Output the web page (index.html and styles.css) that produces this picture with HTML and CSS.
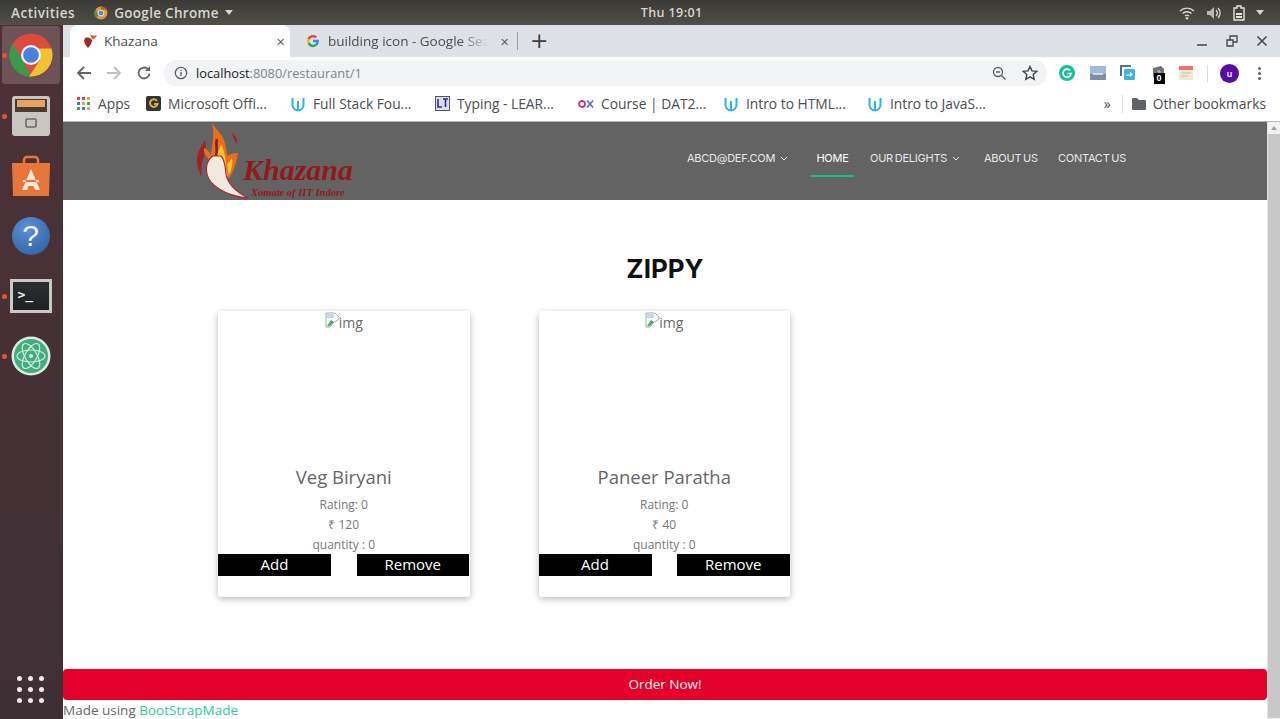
FILE: index.html
```html
<!DOCTYPE html>
<html lang="en">
<head>
  <meta charset="UTF-8" />
  <title>Khazana</title>
  <link rel="stylesheet" href="styles.css">
</head>
<body>

  <!-- Ubuntu top bar -->
  <div class="topbar">
    <span class="activities">Activities</span>
    <span class="app-menu">
      <svg width="14" height="14" viewBox="0 0 24 24"><circle cx="12" cy="12" r="11" fill="#d9a033"/><path d="M12 1a11 11 0 0 1 9.5 5.5H12z" fill="#c9503c"/><path d="M2.5 6.5 8 16 3 20A11 11 0 0 1 2.5 6.5z" fill="#5c8a4a"/><circle cx="12" cy="12" r="5" fill="#5a86c8" stroke="#eee" stroke-width="1.5"/></svg>
      Google Chrome
      <i class="caret"></i>
    </span>
    <span class="clock">Thu 19:01</span>
    <span class="tray">
      <svg width="16" height="14" viewBox="0 0 16 14"><path d="M1 5a10 10 0 0 1 14 0M3.500 7.500a6.500 6.500 0 0 1 9 0M6 10a3 3 0 0 1 4 0" fill="none" stroke="#d8d8d4" stroke-width="1.400"/><circle cx="8" cy="12.300" r="1.300" fill="#d8d8d4"/></svg>
      <svg width="16" height="14" viewBox="0 0 16 14"><path d="M1 5h3l4-4v12l-4-4H1z" fill="#b8b8b4"/><path d="M10 4a4 4 0 0 1 0 6M12 2a7 7 0 0 1 0 10" fill="none" stroke="#d8d8d4" stroke-width="1.300"/></svg>
      <svg width="12" height="16" viewBox="0 0 12 16"><path d="M4 1h4v2h3v12H1V3h3z" fill="none" stroke="#e4e4e0" stroke-width="1.400"/><path d="M3 8h6v2H3zM3 11h6v2H3z" fill="#e4e4e0"/></svg>
      <i class="caret"></i>
    </span>
  </div>

  <div class="desktop">

    <!-- Launcher -->
    <aside class="dock">
      <div class="dock-item active">
        <i class="run-dot"></i>
        <svg width="44" height="44" viewBox="0 0 44 44"><circle cx="22" cy="22" r="21.500" fill="#dd4b3c"/><path d="M3.800 10.500 13 26l9 17.500A21.500 21.500 0 0 1 3.800 10.500z" fill="#3a9a4c"/><path d="M42.500 15.500A21.500 21.500 0 0 1 20 43.400L31 27l-9-11.500z" fill="#f2c230"/><circle cx="22" cy="22" r="10" fill="#eef2f8"/><circle cx="22" cy="22" r="7.800" fill="#4a80e0"/></svg>
      </div>
      <div class="dock-item">
        <i class="run-dot"></i>
        <svg width="38" height="42" viewBox="0 0 38 42"><rect x="0" y="1" width="38" height="40" rx="3" fill="#c8c6c0"/><rect x="3" y="4" width="32" height="13" fill="#4c3b32"/><rect x="5" y="5" width="28" height="7" fill="#e8a263"/><rect x="14" y="24" width="10" height="8" rx="1" fill="none" stroke="#6a6a66" stroke-width="1.600"/></svg>
      </div>
      <div class="dock-item">
        <svg width="40" height="42" viewBox="0 0 40 42"><path d="M13 8V5a3 3 0 0 1 3-3h8a3 3 0 0 1 3 3v3" fill="none" stroke="#e8763a" stroke-width="2.500"/><path d="M1 8h38l-1 33H2z" fill="#e8763a"/><path d="M20 14 11 35h5l1.500-4h5l1.500 4h5zM12 25h16v2H12z" fill="#fbe6d8"/></svg>
      </div>
      <div class="dock-item">
        <div class="help-ball">?</div>
      </div>
      <div class="dock-item">
        <i class="run-dot"></i>
        <div class="term"><span>&gt;_</span></div>
      </div>
      <div class="dock-item">
        <i class="run-dot"></i>
        <svg width="40" height="40" viewBox="0 0 40 40"><circle cx="20" cy="20" r="19.500" fill="#dfe9e2"/><circle cx="20" cy="20" r="17" fill="#3fae7c"/><g fill="none" stroke="#d4eadf" stroke-width="1.200"><ellipse cx="20" cy="20" rx="14" ry="6"/><ellipse cx="20" cy="20" rx="14" ry="6" transform="rotate(60 20 20)"/><ellipse cx="20" cy="20" rx="14" ry="6" transform="rotate(120 20 20)"/></g><circle cx="20" cy="20" r="2" fill="#d4eadf"/></svg>
      </div>
      <div class="dock-grid">
        <i></i><i></i><i></i><i></i><i></i><i></i><i></i><i></i><i></i>
      </div>
    </aside>

    <div class="browser">

      <!-- Tabs -->
      <div class="tabstrip">
        <div class="tab active-tab">
          <svg width="16" height="16" viewBox="0 0 16 16"><path d="M8 1c2 2 5 2 7 1-1 2-2 4-5 4z" fill="#c9602c"/><path d="M3 5c3-1 6 0 7 2 0 3-2 6-4 8C3 12 1 8 3 5z" fill="#a02a2a"/></svg>
          <span class="tab-title">Khazana</span>
          <span class="tab-x">&#10005;</span>
        </div>
        <div class="tab other-tab">
          <svg width="14" height="14" viewBox="0 0 48 48"><path d="M44 24c0-1.500-.1-3-.4-4H24v8h11.300a10 10 0 0 1-4.200 6.500l6.800 5.300C41.900 36 44 30.500 44 24z" fill="#4285f4"/><path d="M24 45c5.700 0 10.400-1.900 13.900-5.200l-6.800-5.300c-1.900 1.300-4.300 2-7.100 2-5.500 0-10.100-3.700-11.800-8.700l-7 5.400C8.700 39.900 15.800 45 24 45z" fill="#34a853"/><path d="M12.200 27.800a12.700 12.700 0 0 1 0-7.600l-7-5.400a21 21 0 0 0 0 18.400z" fill="#fbbc05"/><path d="M24 11.500c3.100 0 5.900 1.100 8.100 3.200l6-6C34.400 5.200 29.700 3 24 3 15.800 3 8.700 8.100 5.200 14.800l7 5.400c1.700-5 6.300-8.700 11.800-8.700z" fill="#ea4335"/></svg>
          <span class="tab-title fade">building icon - Google Sea</span>
          <span class="tab-x">&#10005;</span>
        </div>
        <i class="tab-sep"></i>
        <span class="new-tab">+</span>
        <div class="win-btns">
          <svg width="12" height="12" viewBox="0 0 12 12"><path d="M1 10h10" stroke="#444" stroke-width="1.500"/></svg>
          <svg width="12" height="12" viewBox="0 0 12 12"><path d="M1 5h6v6H1z" fill="none" stroke="#444" stroke-width="1.300"/><path d="M4 5V1h7v6H7" fill="none" stroke="#444" stroke-width="1.300"/></svg>
          <svg width="12" height="12" viewBox="0 0 12 12"><path d="M1.500 1.500l9 9M10.500 1.500l-9 9" stroke="#444" stroke-width="1.500"/></svg>
        </div>
      </div>

      <!-- Address bar -->
      <div class="toolbar">
        <svg class="nav-icon" width="16" height="16" viewBox="0 0 16 16"><path d="M15 8H2M8 2 2 8l6 6" fill="none" stroke="#5f6368" stroke-width="1.800"/></svg>
        <svg class="nav-icon" width="16" height="16" viewBox="0 0 16 16"><path d="M1 8h13M8 2l6 6-6 6" fill="none" stroke="#bcbfc4" stroke-width="1.800"/></svg>
        <svg class="nav-icon" width="16" height="16" viewBox="0 0 16 16"><path d="M13.500 8.500A5.500 5.500 0 1 1 12 4.200" fill="none" stroke="#5f6368" stroke-width="1.800"/><path d="M14 1v5H9z" fill="#5f6368"/></svg>
        <div class="omnibox">
          <svg width="14" height="14" viewBox="0 0 14 14"><circle cx="7" cy="7" r="5.700" fill="none" stroke="#5f6368" stroke-width="1.300"/><path d="M7 6v4M7 3.700v1.300" stroke="#5f6368" stroke-width="1.400"/></svg>
          <span class="url"><b>localhost</b>:8080/restaurant/1</span>
          <svg class="omni-right" width="14" height="14" viewBox="0 0 14 14"><circle cx="6" cy="6" r="4.500" fill="none" stroke="#5f6368" stroke-width="1.400"/><path d="M9.500 9.500 13.500 13.500M4 6h4" stroke="#5f6368" stroke-width="1.400"/></svg>
          <svg width="16" height="16" viewBox="0 0 16 16"><path d="M8 1.500l2 4.400 4.700.5-3.500 3.200 1 4.700L8 11.900l-4.200 2.400 1-4.700L1.300 6.400 6 5.900z" fill="none" stroke="#444" stroke-width="1.400"/></svg>
        </div>
        <div class="extensions">
          <svg width="16" height="16" viewBox="0 0 16 16"><circle cx="8" cy="8" r="8" fill="#15c39a"/><path d="M11 5.500A4 4 0 1 0 12 8.500H8.500" fill="none" stroke="#fff" stroke-width="1.600"/></svg>
          <svg width="16" height="14" viewBox="0 0 16 14"><rect width="16" height="14" fill="#9fbcd6"/><rect y="8" width="16" height="6" fill="#7d8ea6"/><path d="M3 8h10" stroke="#e8eef4" stroke-width="1.500"/></svg>
          <svg width="16" height="16" viewBox="0 0 16 16"><path d="M1 11V1h10" fill="none" stroke="#1d4a78" stroke-width="1.600"/><rect x="4" y="4" width="11" height="11" rx="1.500" fill="#3fb4dc"/><path d="M6 9.500h4V7l3 2.500-3 2.500V10.500H6z" fill="#fff"/></svg>
          <span class="ext-badged">
            <svg width="14" height="16" viewBox="0 0 14 16"><path d="M2 3l8-2 3 3v9l-6 2-5-3z" fill="#6e7074"/><path d="M6 6h3v2H7v2" fill="none" stroke="#ccc" stroke-width="1"/></svg>
            <span class="badge">0</span>
          </span>
          <svg width="14" height="14" viewBox="0 0 14 14"><rect width="14" height="14" fill="#f3e8d4"/><rect width="14" height="4" fill="#e8746a"/><path d="M2 7h10M2 10h7" stroke="#c9c2a8" stroke-width="1.200"/></svg>
        </div>
        <i class="tool-sep"></i>
        <span class="avatar">u</span>
        <span class="kebab"><i></i><i></i><i></i></span>
      </div>

      <!-- Bookmarks -->
      <div class="bookmarks">
        <span class="bm bm-apps">
          <svg width="14" height="14" viewBox="0 0 14 14"><g fill="#d8473c"><rect width="3" height="3"/><rect x="5" width="3" height="3"/></g><rect x="10" width="3" height="3" fill="#e8a93c"/><rect y="5" width="3" height="3" fill="#3c78d8"/><rect x="5" y="5" width="3" height="3" fill="#e8a93c"/><rect x="10" y="5" width="3" height="3" fill="#3ca85c"/><rect y="10" width="3" height="3" fill="#3ca85c"/><rect x="5" y="10" width="3" height="3" fill="#3c78d8"/><rect x="10" y="10" width="3" height="3" fill="#e8a93c"/></svg>
          Apps
        </span>
        <span class="bm bm-office">
          <svg width="15" height="15" viewBox="0 0 15 15"><rect width="15" height="15" rx="2" fill="#333"/><path d="M11 5a3.800 3.800 0 1 0 .5 3H8" fill="none" stroke="#d8b43c" stroke-width="2"/></svg>
          Microsoft Offi...
        </span>
        <span class="bm bm-full">
          <svg class="udacity" width="16" height="16" viewBox="0 0 16 16"><path d="M2.500 2v7a5.500 5.500 0 0 0 11 0V2M8 5v9" fill="none" stroke="#2eb4e0" stroke-width="2"/></svg>
          Full Stack Fou...
        </span>
        <span class="bm bm-typing">
          <svg width="15" height="15" viewBox="0 0 15 15"><rect x=".5" y=".5" width="14" height="14" fill="#dcdcf0" stroke="#555"/><path d="M3 3v8h4M8 3h5M10.500 3v8" fill="none" stroke="#2e2e8c" stroke-width="1.600"/></svg>
          Typing - LEAR...
        </span>
        <span class="bm bm-edx">
          <svg width="16" height="10" viewBox="0 0 16 10"><circle cx="4" cy="5" r="3" fill="none" stroke="#c2387e" stroke-width="1.800"/><path d="M9 1.500l6 7M15 1.500l-6 7" stroke="#5a6cc0" stroke-width="1.700"/></svg>
          Course | DAT2...
        </span>
        <span class="bm bm-html">
          <svg class="udacity" width="16" height="16" viewBox="0 0 16 16"><path d="M2.500 2v7a5.500 5.500 0 0 0 11 0V2M8 5v9" fill="none" stroke="#2eb4e0" stroke-width="2"/></svg>
          Intro to HTML...
        </span>
        <span class="bm">
          <svg class="udacity" width="16" height="16" viewBox="0 0 16 16"><path d="M2.500 2v7a5.500 5.500 0 0 0 11 0V2M8 5v9" fill="none" stroke="#2eb4e0" stroke-width="2"/></svg>
          Intro to JavaS...
        </span>
        <span class="bm-more">&raquo;</span>
        <i class="bm-sep"></i>
        <span class="bm bm-other">
          <svg width="14" height="12" viewBox="0 0 14 12"><path d="M0 1a1 1 0 0 1 1-1h4l2 2h6a1 1 0 0 1 1 1v8a1 1 0 0 1-1 1H1a1 1 0 0 1-1-1z" fill="#5f6368"/></svg>
          Other bookmarks
        </span>
      </div>

      <!-- The page itself -->
      <div class="viewport">
        <div class="page">

          <header class="site-header">
            <svg class="logo" width="158" height="78" viewBox="0 0 158 78">
              <path d="M9 18C6 24 1 30 1 38c0 7 2 12 5 17-1-7-1-12 1-18 2-6 4-12 2-19zM36 11c4 3 6 7 5 11-2-3-4-6-5-11z" fill="#a42020"/>
              <path d="M16 1c5 8 11 11 13 20 1 5 2 10 2 13 3-2 7-3 11-3-1 7-3 15-8 24l-8 4-12-20c-4-6-7-8-6-13 3 1 5 4 7 7 1-12 4-20 1-32z" fill="#ea6f1c"/>
              <path d="M25 22c4 8 5 16 5 24l2 8-8-6-5-12c2-5 5-9 6-14zM36 36c1 5 0 11-3 17l-2-10z" fill="#f6c52c"/>
              <path d="M21 17c-2 5 1 10-1 17" fill="none" stroke="#8c1c1c" stroke-width="2.500"/>
              <path d="M17 34C11 38 9 46 11 52 13 62 28 74 52 76 42 71 32 64 30 52 29 44 29 38 25 34z" fill="#f2e8e2" stroke="#b02a2a" stroke-width="1.200"/>
              <text class="logo-name" x="47" y="58">Khazana</text>
              <text class="logo-sub" x="55" y="74">Xomate of IIT Indore</text>
            </svg>

            <nav class="site-nav">
              <a class="nav-link nav-user">abcd@def.com <svg class="chev" width="8" height="5" viewBox="0 0 8 5"><path d="M1 1l3 3 3-3" fill="none" stroke="#e4e4e4" stroke-width="1"/></svg></a>
              <a class="nav-link nav-home">Home</a>
              <a class="nav-link nav-delights">Our Delights <svg class="chev" width="8" height="5" viewBox="0 0 8 5"><path d="M1 1l3 3 3-3" fill="none" stroke="#e4e4e4" stroke-width="1"/></svg></a>
              <a class="nav-link nav-about">About Us</a>
              <a class="nav-link">Contact Us</a>
            </nav>
          </header>

          <main class="menu">
            <h1 class="restaurant-name">ZIPPY</h1>

            <div class="dish-row">
              <div class="dish-card">
                <div class="dish-img">
                  <svg width="16" height="16" viewBox="0 0 16 16"><path d="M1 1h9l4 4v2l-6 4-3 4H1z" fill="#fff" stroke="#a8a8a8"/><path d="M2 14l4-6 3 2-4 4z" fill="#5aa85c"/><path d="M2 2h7v4H2z" fill="#c4d8f4"/></svg>
                  <span>img</span>
                </div>
                <h3 class="dish-name">Veg Biryani</h3>
                <p class="dish-line">Rating: 0</p>
                <p class="dish-line">&#8377; 120</p>
                <p class="dish-line">quantity : 0</p>
                <div class="dish-btns">
                  <button class="btn-add">Add</button>
                  <button class="btn-remove">Remove</button>
                </div>
              </div>

              <div class="dish-card">
                <div class="dish-img">
                  <svg width="16" height="16" viewBox="0 0 16 16"><path d="M1 1h9l4 4v2l-6 4-3 4H1z" fill="#fff" stroke="#a8a8a8"/><path d="M2 14l4-6 3 2-4 4z" fill="#5aa85c"/><path d="M2 2h7v4H2z" fill="#c4d8f4"/></svg>
                  <span>img</span>
                </div>
                <h3 class="dish-name">Paneer Paratha</h3>
                <p class="dish-line">Rating: 0</p>
                <p class="dish-line">&#8377; 40</p>
                <p class="dish-line">quantity : 0</p>
                <div class="dish-btns">
                  <button class="btn-add">Add</button>
                  <button class="btn-remove">Remove</button>
                </div>
              </div>
            </div>
          </main>

          <button class="order-now">Order Now!</button>
          <p class="credits">Made using <a>BootStrapMade</a></p>
        </div>

        <div class="scrollbar">
          <i class="scroll-up"></i>
          <i class="scroll-thumb"></i>
        </div>
      </div>
    </div>
  </div>

</body>
</html>
```

FILE: styles.css
```css
/* Reset and base styling */
* {
  margin: 0;
  padding: 0;
  box-sizing: border-box;
}

html, body {
  height: 719px;
  overflow: hidden;
}

body {
  font-family: 'Open Sans', sans-serif;
  display: flex;
  flex-direction: column;
  background: #fff;
  color: #444;
}

i {
  display: block;
}

/* Top bar */
.topbar {
  height: 25px;
  flex: none;
  display: flex;
  align-items: center;
  padding: 0 16px 0 11px;
  background: linear-gradient(#3b3a36, #504e47);
  color: #d6d5d0;
  font-size: 13.5px;
  font-weight: 600;
}

.activities {
  letter-spacing: .5px;
}

.app-menu {
  display: flex;
  align-items: center;
  gap: 6px;
  margin-left: 19px;
  letter-spacing: .3px;
}

.caret {
  width: 0;
  height: 0;
  border-left: 4.5px solid transparent;
  border-right: 4.5px solid transparent;
  border-top: 5px solid #d6d5d0;
}

.clock {
  margin-left: 408px;
  font-size: 12.5px;
  letter-spacing: .4px;
}

.tray {
  margin-left: auto;
  display: flex;
  align-items: center;
  gap: 11px;
}

.desktop {
  flex: 1;
  display: flex;
  min-height: 0;
}

/* Launcher */
.dock {
  width: 63px;
  flex: none;
  display: flex;
  flex-direction: column;
  align-items: center;
  padding: 1px 2px 0 0;
  background: linear-gradient(#4d3138, #3d3034);
}

.dock-item {
  position: relative;
  width: 58px;
  height: 60px;
  display: flex;
  align-items: center;
  justify-content: center;
}

.dock-item.active {
  height: 58px;
  margin-bottom: 2px;
  border-radius: 3px;
  background: #6d5257;
}

.run-dot {
  position: absolute;
  left: 0;
  top: 50%;
  width: 5px;
  height: 5px;
  margin-top: -2px;
  border-radius: 50%;
  background: #dd5a2c;
}

.help-ball {
  width: 38px;
  height: 38px;
  border-radius: 50%;
  background: radial-gradient(circle at 40% 30%, #5a92d4, #2a5a9c);
  color: #f2f2f2;
  font: 400 30px/38px 'Liberation Sans', sans-serif;
  text-align: center;
}

.term {
  width: 42px;
  height: 34px;
  padding: 6px 0 0 5px;
  background: linear-gradient(#2a2e30, #1e2224);
  border: 3px solid #c8c8c4;
  color: #f2f2f2;
  font: bold 13px/14px 'DejaVu Sans Mono', monospace;
}

.dock-grid {
  margin-top: auto;
  margin-bottom: 16px;
  display: grid;
  grid-template-columns: repeat(3, 5px);
  gap: 6px;
}

.dock-grid i {
  width: 5px;
  height: 5px;
  border-radius: 50%;
  background: #eeeae8;
}

/* Browser */
.browser {
  flex: 1;
  min-width: 0;
  display: flex;
  flex-direction: column;
}

.tabstrip {
  height: 32px;
  flex: none;
  display: flex;
  align-items: center;
  padding-left: 7px;
  background: #dee1e6;
  font-size: 13.5px;
}

.tab {
  height: 32px;
  display: flex;
  align-items: center;
  color: #4a4d51;
}

.active-tab {
  width: 220px;
  gap: 6px;
  padding: 0 5px 0 12px;
  background: #fff;
  border-radius: 8px 8px 0 0;
}

.other-tab {
  width: 227px;
  gap: 8px;
  padding: 0 8px 0 16px;
}

.tab-title {
  flex: 1;
  white-space: nowrap;
}

.fade {
  -webkit-mask-image: linear-gradient(90deg, #000 80%, transparent 98%);
  mask-image: linear-gradient(90deg, #000 80%, transparent 98%);
}

.tab-x {
  font-size: 11px;
  color: #5f6368;
}

.tab-sep {
  width: 1px;
  height: 18px;
  background: #9a9da2;
}

.new-tab {
  margin-left: 12px;
  font: 22px/1 'DejaVu Sans', sans-serif;
  color: #3c4043;
}

.win-btns {
  margin-left: auto;
  display: flex;
  gap: 18px;
  padding-right: 12px;
}

.toolbar {
  height: 33px;
  flex: none;
  display: flex;
  align-items: center;
  padding: 0 0 1px 13px;
  background: #fff;
}

.nav-icon {
  margin-right: 14px;
}

.omnibox {
  width: 883px;
  height: 26px;
  margin-left: -2px;
  display: flex;
  align-items: center;
  gap: 9px;
  padding: 0 9px 0 10px;
  border-radius: 13px;
  background: #f1f3f4;
  font-size: 12.8px;
  color: #80868b;
}

.url {
  margin-left: -1px;
}

.url b {
  font-weight: 400;
  color: #202124;
}

.omni-right {
  margin-left: auto;
  margin-right: 7px;
}

.extensions {
  display: flex;
  align-items: center;
  gap: 14.5px;
  margin-left: 12px;
}

.ext-badged {
  position: relative;
  display: flex;
}

.badge {
  position: absolute;
  left: 3px;
  top: 8px;
  width: 11px;
  height: 11px;
  background: #000;
  color: #fff;
  font: bold 9px/11px 'Liberation Sans', sans-serif;
  text-align: center;
}

.tool-sep {
  width: 1px;
  height: 17px;
  margin-left: 14px;
  background: #dadce0;
}

.avatar {
  width: 19px;
  height: 19px;
  margin-left: 12px;
  border-radius: 50%;
  background: #5a0ca0;
  color: #ddd;
  font: bold 9px/19px 'Open Sans', sans-serif;
  text-align: center;
}

.kebab {
  margin-left: 19px;
  display: flex;
  flex-direction: column;
  gap: 2px;
}

.kebab i {
  width: 3px;
  height: 3px;
  border-radius: 50%;
  background: #5f6368;
}

.bookmarks {
  height: 32px;
  flex: none;
  display: flex;
  align-items: center;
  padding: 0 0 4px 14px;
  background: #fff;
  border-bottom: 1px solid #b4b6b8;
  font-size: 13.8px;
  color: #4a4d51;
  white-space: nowrap;
}

.bm {
  display: flex;
  align-items: center;
  gap: 7px;
}

.bm-apps { width: 69px; }
.bm-office { width: 144px; }
.bm-full { width: 145px; }
.bm-typing { width: 143px; }
.bm-edx { width: 145px; }
.bm-html { width: 144px; }

.bm-more {
  margin-left: auto;
  font-size: 14px;
}

.bm-sep {
  width: 1px;
  height: 18px;
  margin: 0 9px 0 11px;
  background: #dadce0;
}

.bm-other {
  padding-right: 14px;
}

/* Site page */
.viewport {
  flex: 1;
  min-height: 0;
  display: flex;
}

.page {
  flex: 1;
  min-width: 0;
  display: flex;
  flex-direction: column;
}

.site-header {
  height: 78px;
  flex: none;
  display: flex;
  align-items: center;
  padding-left: 133px;
  background: #636363;
}

.logo-name {
  font: italic 700 30px 'Liberation Serif', serif;
  fill: #8e1a1e;
}

.logo-sub {
  font: italic 700 10.5px 'Liberation Serif', serif;
  fill: #8e1a1e;
}

.site-nav {
  display: flex;
  align-self: flex-start;
  margin: 19px 0 0 333px;
}

.nav-link {
  display: flex;
  align-items: center;
  gap: 5px;
  height: 36px;
  padding-bottom: 2px;
  font: 11px 'Inter', sans-serif;
  letter-spacing: -.25px;
  word-spacing: -1px;
  color: #e8e8e8;
  text-transform: uppercase;
  white-space: nowrap;
}

.nav-user {
  width: 124px;
}

.nav-home {
  width: 43px;
  justify-content: center;
  margin-right: 16px;
  padding-bottom: 0;
  color: #fff;
  border-bottom: 2px solid #1bbd8c;
}

.nav-delights {
  width: 114px;
}

.nav-about {
  width: 74px;
}

.menu {
  flex: 1;
  padding-top: 51px;
}

.restaurant-name {
  font: 700 26px/36px 'Inter', sans-serif;
  color: #111;
  text-align: center;
  margin-bottom: 24px;
}

.dish-row {
  display: flex;
  gap: 69px;
  padding-left: 155px;
}

.dish-card {
  width: 251.5px;
  height: 286px;
  border-radius: 3px;
  background: #fff;
  box-shadow: 0 2px 7px rgba(0, 0, 0, .28);
  text-align: center;
}

.dish-img {
  height: 149px;
  padding-top: 1px;
  display: flex;
  justify-content: center;
  font-size: 14px;
  line-height: 20px;
  color: #6a6a6a;
}

.dish-img span {
  padding-top: 1px;
  margin-left: -2px;
}

.dish-name {
  font-size: 18.5px;
  font-weight: 400;
  line-height: 34px;
  color: #666;
  margin-bottom: 1px;
}

.dish-line {
  font-size: 12px;
  line-height: 20px;
  color: #777;
}

.dish-btns {
  display: flex;
  justify-content: space-between;
  margin-top: -1px;
}

.dish-btns button {
  height: 22px;
  padding-bottom: 2px;
  border: none;
  background: #000;
  color: #fff;
  font: 15px 'Open Sans', sans-serif;
}

.btn-add {
  width: 113px;
}

.btn-remove {
  width: 112.5px;
  margin-right: .5px;
}

.order-now {
  height: 31px;
  flex: none;
  padding-bottom: 2px;
  border: none;
  border-radius: 4px;
  background: #e4002b;
  color: #f6f6f6;
  font: 13.5px 'Open Sans', sans-serif;
}

.credits {
  height: 19px;
  flex: none;
  font-size: 13.5px;
  line-height: 20px;
  color: #666;
}

.credits a {
  color: #2fc79c;
}

.scrollbar {
  width: 13px;
  flex: none;
  display: flex;
  flex-direction: column;
  background: #f1f1f1;
  border-left: 1px solid #e4e4e4;
}

.scroll-up {
  width: 0;
  height: 0;
  margin: 4px auto 4px;
  border-left: 3.5px solid transparent;
  border-right: 3.5px solid transparent;
  border-bottom: 4px solid #a0a0a0;
}

.scroll-thumb {
  flex: 1;
  margin-bottom: 1px;
  background: #c8c8c8;
}
```
